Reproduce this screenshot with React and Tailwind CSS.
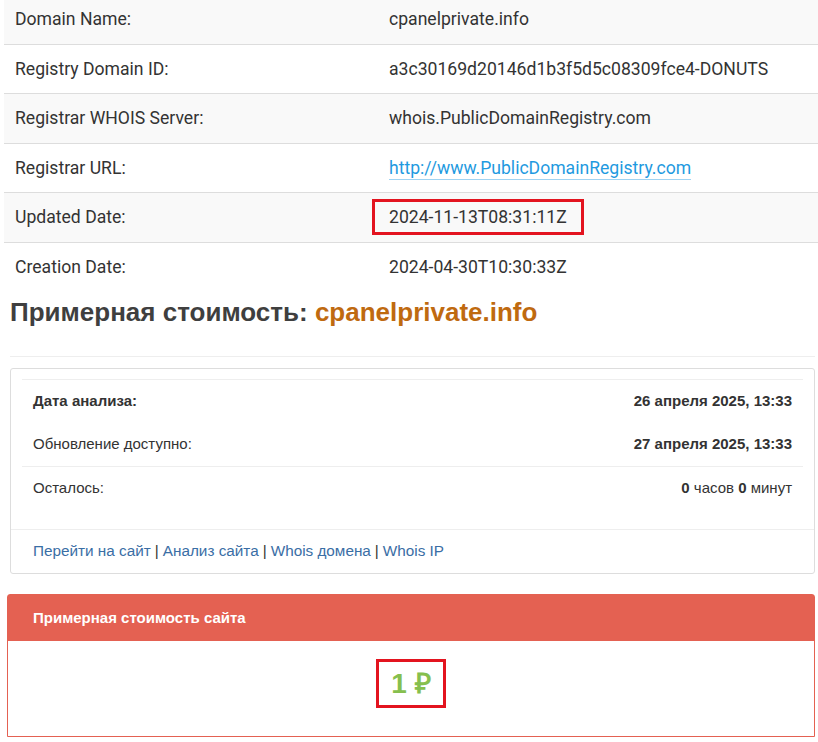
const whois = [
  { label: "Domain Name:", value: "cpanelprivate.info" },
  { label: "Registry Domain ID:", value: "a3c30169d20146d1b3f5d5c08309fce4-DONUTS" },
  { label: "Registrar WHOIS Server:", value: "whois.PublicDomainRegistry.com" },
  { label: "Registrar URL:", value: "http://www.PublicDomainRegistry.com", link: true },
  { label: "Updated Date:", value: "2024-11-13T08:31:11Z", marked: true },
  { label: "Creation Date:", value: "2024-04-30T10:30:33Z" },
];

function WhoisRow({ row, index }) {
  return (
    <div
      className={`flex h-[49.5px] items-center border-t border-[#dddddd] first:border-t-0 ${
        index % 2 === 0 ? "bg-[#f9f9f9]" : "bg-white"
      }`}
    >
      <div className="w-[385px] shrink-0 pl-[11px] text-[17.6px] text-[#333]">{row.label}</div>
      <div className="text-[17.6px] text-[#333]">
        {row.link ? (
          <a className="border-b border-[#9fd3f2] pb-px text-[#1f9ae0]" href="#">
            {row.value}
          </a>
        ) : row.marked ? (
          <span className="-ml-[17px] inline-block border-[3px] border-[#e3141f] px-[14px] py-[2px]">
            {row.value}
          </span>
        ) : (
          row.value
        )}
      </div>
    </div>
  );
}

export default function App() {
  return (
    <div className="min-h-[742px] bg-white" style={{ fontFamily: "Roboto, 'Liberation Sans', sans-serif" }}>
      <div className="ml-[4px] -mt-[6px]">
        {whois.map((row, i) => (
          <WhoisRow key={row.label} row={row} index={i} />
        ))}
      </div>

      <div className="pl-[10px] pr-[3px] font-['Liberation_Sans',Arial,sans-serif]">
        <h1 className="mt-[1px] text-[26px] font-bold leading-[40px] text-[#3f3f3f]">
          Примерная стоимость: <span className="text-[#bf6a10]">cpanelprivate.info</span>
        </h1>
        <div className="mt-[24px] border-t border-[#eeeeee]" />

        <div className="mt-[11px] rounded-[3px] border border-[#dddddd] text-[15px] text-[#333]">
          <div className="px-[11px] pt-[10px]">
            <div className="border-t border-[#eeeeee]">
              <div className="flex h-[43px] items-center justify-between px-[11px]">
                <span className="font-bold">Дата анализа:</span>
                <span className="font-bold">26 апреля 2025, 13:33</span>
              </div>
              <div className="flex h-[43px] items-center justify-between px-[11px]">
                <span>Обновление доступно:</span>
                <span className="font-bold">27 апреля 2025, 13:33</span>
              </div>
              <div className="flex h-[43px] items-center justify-between border-t border-[#eeeeee] px-[11px]">
                <span>Осталось:</span>
                <span>
                  <b>0</b> часов <b>0</b> минут
                </span>
              </div>
            </div>
          </div>
          <div className="mt-[20px] flex h-[44px] items-center border-t border-[#eeeeee] px-[22px] text-[15.3px] text-[#3a6ea5]">
            <a href="#">Перейти на сайт</a>
            <span className="px-[4px] text-[#333]">|</span>
            <a href="#">Анализ сайта</a>
            <span className="px-[4px] text-[#333]">|</span>
            <a href="#">Whois домена</a>
            <span className="px-[4px] text-[#333]">|</span>
            <a href="#">Whois IP</a>
          </div>
        </div>

        <div className="mt-[20px] -ml-[3px] rounded-t-[3px] border border-[#e46152]">
          <div className="flex h-[46px] items-center bg-[#e46152] px-[25px] text-[15px] font-bold text-white">
            Примерная стоимость сайта
          </div>
          <div className="flex h-[95px] justify-center bg-white pt-[18px]">
            <span className="inline-block h-[49px] border-[3px] border-[#e3141f] px-[12px] text-[28px] font-bold leading-[43px] text-[#86bf4e]">
              1 ₽
            </span>
          </div>
        </div>
      </div>
    </div>
  );
}
